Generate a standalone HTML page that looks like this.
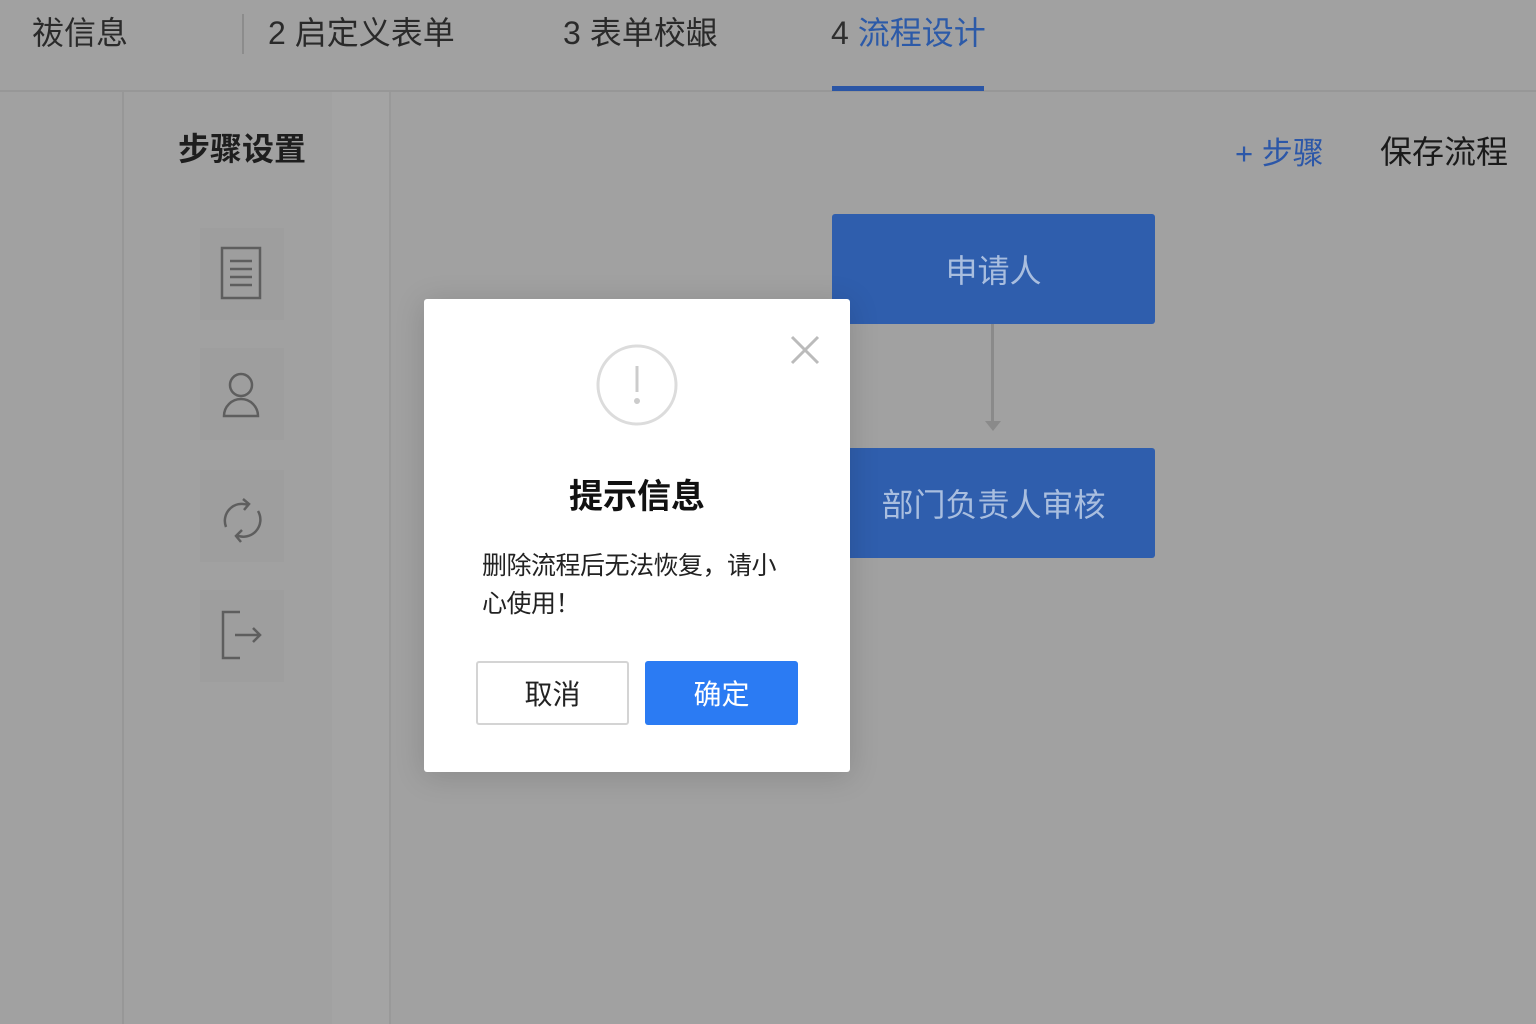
<!DOCTYPE html>
<html><head><meta charset="utf-8"><style>
*{margin:0;padding:0;box-sizing:border-box}
body{width:1536px;height:1024px;background:#a1a1a1;position:relative;overflow:hidden;font-family:"Liberation Sans","Noto Sans CJK SC",sans-serif;color:#222}
.a{position:absolute;white-space:nowrap}
.tab{font-size:32px;top:8px;color:#2a2a2a}
.icb{position:absolute;left:200px;width:84px;height:92px;background:#9e9e9e}
.node{position:absolute;background:#2f5ead;color:#a9bedf;font-size:32px;display:flex;align-items:center;justify-content:center;border-radius:3px}
</style></head><body>
<div class="a" style="left:0;top:90px;width:1536px;height:2px;background:#979797"></div>
<div class="a" style="left:122px;top:92px;width:2px;height:932px;background:#979797"></div>
<div class="a" style="left:332px;top:92px;width:58px;height:932px;background:#a4a4a4"></div>
<div class="a" style="left:389px;top:92px;width:2px;height:932px;background:#999"></div>
<div class="a" style="left:242px;top:14px;width:2px;height:40px;background:#8c8c8c"></div>
<div class="a tab" style="left:32px">祓信息</div>
<div class="a tab" style="left:268px">2 启定义表单</div>
<div class="a tab" style="left:563px">3 表单校龈</div>
<div class="a tab" style="left:831px"><span style="color:#2e2e2e">4</span> <span style="color:#2c5aa8">流程设计</span></div>
<div class="a" style="left:832px;top:86px;width:152px;height:5px;background:#2a55a5"></div>
<div class="a" style="left:178px;top:124px;font-size:32px;font-weight:bold;color:#1e1e1e">步骤设置</div>
<div class="a" style="left:1235px;top:128px;font-size:31px;color:#2c57a8">+ 步骤</div>
<div class="a" style="left:1380px;top:127px;font-size:32px;color:#1a1a1a">保存流程</div>
<div class="icb" style="top:228px"></div>
<div class="icb" style="top:348px"></div>
<div class="icb" style="top:470px"></div>
<div class="icb" style="top:590px"></div>
<svg class="a" style="left:200px;top:228px" width="84" height="460" fill="none" stroke="#5e5e5e" stroke-width="2.5">
<rect x="22" y="20" width="38" height="50"/><path d="M30 33h22M30 41h22M30 49h22M30 57h22"/>
<circle cx="41" cy="157" r="11"/><path d="M24 188a17 17 0 0 1 34 0z"/>
<path d="M26 299a17 17 0 0 1 22-22M43 271l6 5-5 6M58 283a17 17 0 0 1-22 24M41 314l-5-6 6-6"/>
<path d="M40 384h-17v46h17M35 407h25M53 400l7 7-7 7"/>
</svg>
<div class="node" style="left:832px;top:214px;width:323px;height:110px">申请人</div>
<div class="a" style="left:991px;top:324px;width:3px;height:100px;background:#8a8a8a"></div>
<div class="a" style="left:985px;top:421px;border-left:8px solid transparent;border-right:8px solid transparent;border-top:10px solid #8a8a8a"></div>
<div class="node" style="left:832px;top:448px;width:323px;height:110px">部门负责人审核</div>
<div class="a" style="left:424px;top:299px;width:426px;height:473px;background:#fff;border-radius:3px;box-shadow:0 4px 30px rgba(0,0,0,.15)">
<svg class="a" style="left:172px;top:43px" width="82" height="88"><circle cx="41" cy="43" r="39" fill="none" stroke="#dcdcdc" stroke-width="3"/><path d="M41 24v26" stroke="#ccc" stroke-width="3"/><circle cx="41" cy="59" r="3" fill="#ccc"/></svg>
<svg class="a" style="left:366px;top:36px" width="30" height="30" stroke="#bbb" stroke-width="3"><path d="M2 2l26 26M28 2L2 28"/></svg>
<div class="a" style="left:0;width:426px;text-align:center;top:170px;font-size:34px;font-weight:bold;color:#111">提示信息</div>
<div class="a" style="left:58px;top:248px;font-size:25px;line-height:38px;color:#222;white-space:normal;width:310px;letter-spacing:-0.5px">删除流程后无法恢复，请小心使用！</div>
<div class="a" style="left:52px;top:362px;width:153px;height:64px;border:2px solid #d4d4d4;border-radius:3px;font-size:28px;display:flex;align-items:center;justify-content:center;color:#222">取消</div>
<div class="a" style="left:221px;top:362px;width:153px;height:64px;background:#2b7bf3;border-radius:3px;font-size:28px;display:flex;align-items:center;justify-content:center;color:#fff">确定</div>
</div>
</body></html>
